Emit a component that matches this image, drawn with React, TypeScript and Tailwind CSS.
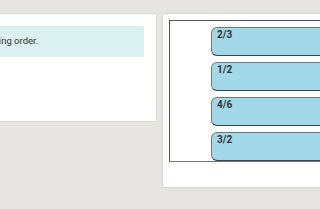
export default function App() {
  const items = ['2/3', '1/2', '4/6', '3/2']

  return (
    <div className="w-[320px] h-[209px] overflow-hidden bg-[#e6e5e1] font-['Roboto',sans-serif] text-[#333]">
      <div className="flex items-start gap-[7px] pt-[14px] ml-[-170px]">
        <div className="w-[326px] shrink-0 h-[107px] bg-white shadow-[0_0_2px_rgba(0,0,0,0.15)] pt-[12px] pl-[12px] pr-[12px]">
          <div className="h-[31px] bg-[#dbf1ef] flex items-center pl-[44px] text-[9.5px]">
            Put the fractions in ascending order.
          </div>
        </div>
        <div className="w-[220px] shrink-0 h-[173px] bg-white shadow-[0_0_2px_rgba(0,0,0,0.2)] pt-[6px] pl-[6px]">
          <div className="h-[142px] border border-[#777] border-t-[#555] border-l-[#555] pl-[41px] pt-[6px] flex flex-col gap-[6px]">
            {items.map((f) => (
              <div
                key={f}
                className="h-[29px] bg-[#a3d8e8] border border-[#777] border-b-[#2f4a55] rounded-[6px] px-[5px] pt-[1px] text-[10px] leading-[12px] font-bold"
              >
                {f}
              </div>
            ))}
          </div>
        </div>
      </div>
    </div>
  )
}
